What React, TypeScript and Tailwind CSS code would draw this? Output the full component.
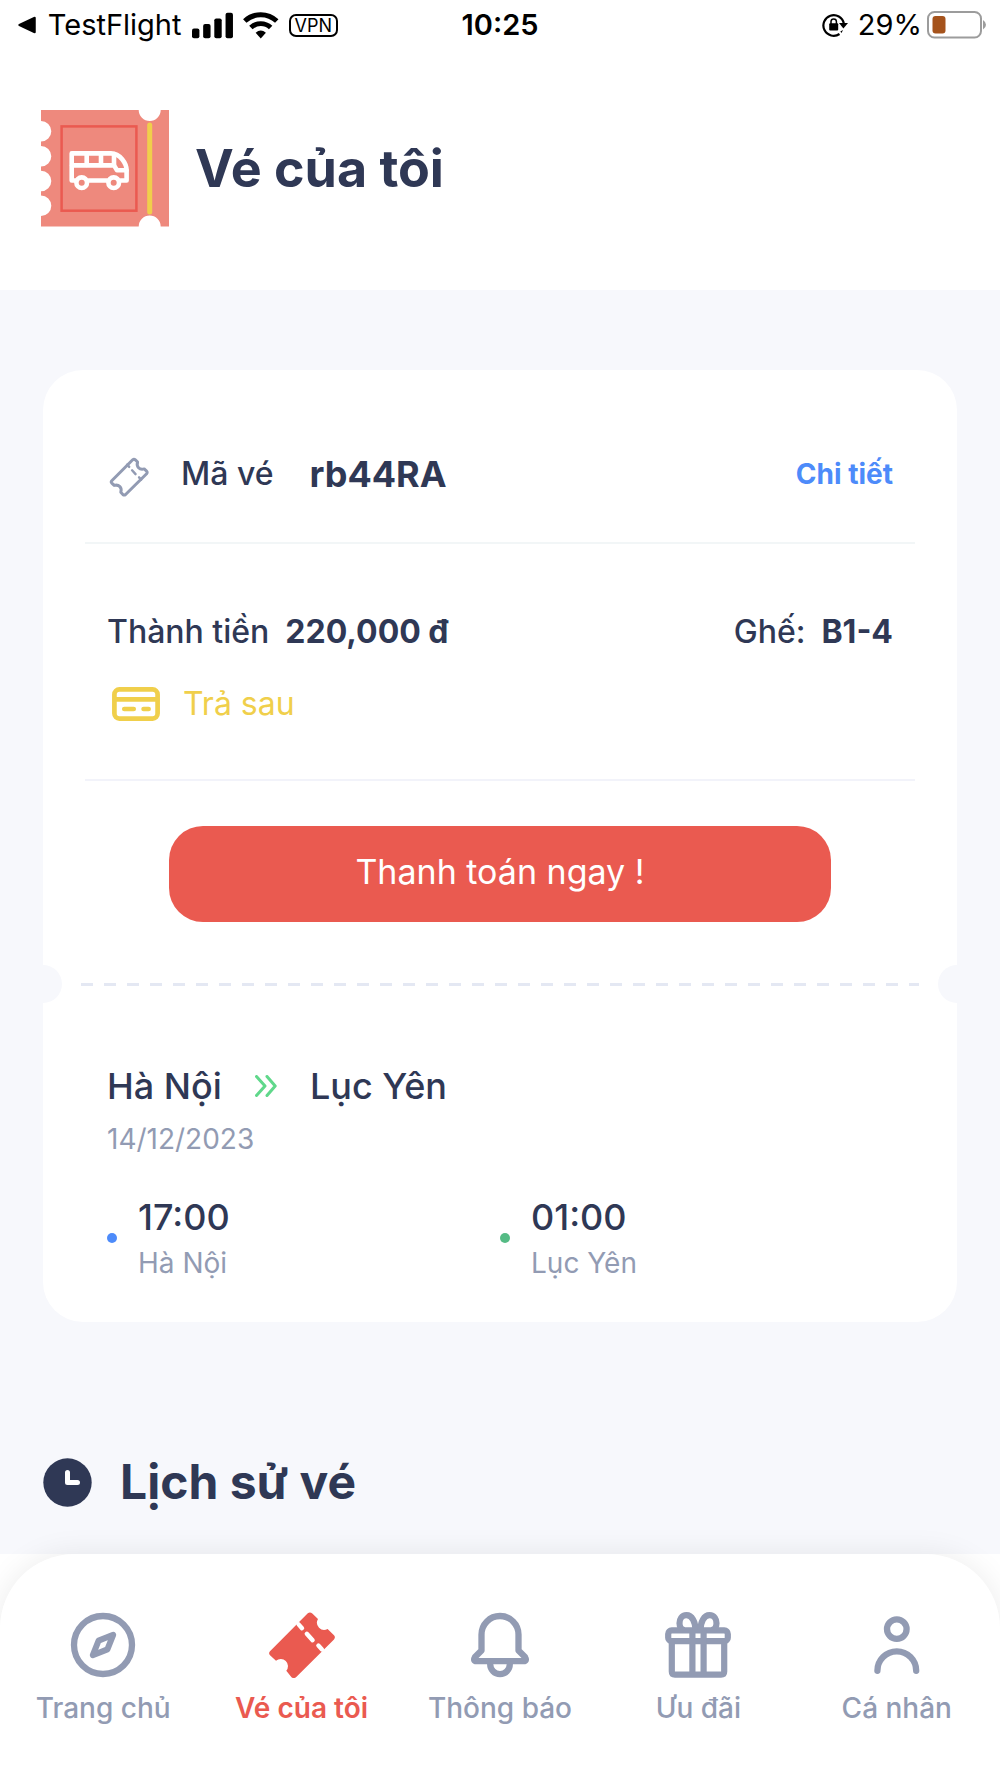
import React from "react";

interface NavItem {
  label: string;
  href: string;
  icon: React.ReactNode;
  active?: boolean;
}

interface StopProps {
  time: string;
  place: string;
  dotClass: string;
}

const TICKET_PATH =
  "M1 39.3 L38.8 1.3 Q41 -0.6 43.3 1.5 L49 7 A7.2 7.2 0 0 0 58.6 17 L65 23.2 Q66.8 25.3 65 27.5 L27 65.2 Q24.6 67 22.5 65.2 L17.3 58.7 A7.2 7.2 0 0 0 7 48.7 L1 43.2 Q-0.8 41.2 1 39.3 Z";

const TICKET_DASHES = "M29.6 12.4 L33 16.2 M37.8 21.8 L43.6 28.2 M49.4 33.6 L53 37.4";

const StatusBar: React.FC = () => {
  return (
    <div className="grid grid-cols-3 items-center h-[50px] px-[14px] text-[29px] leading-8 text-black">
      <div className="flex items-center">
        <svg width="18" height="18" viewBox="0 0 18 18" className="ml-1 mr-3">
          <path d="M1 8 L16 .8 Q18 .3 18 2 V16 Q18 17.7 16 17.2 L1 10 Q-.5 9 1 8 Z" />
        </svg>
        <span>TestFlight</span>
        <svg width="42" height="27" viewBox="0 0 42 27" className="ml-[10px] mr-[10px]">
          <rect x="0" y="16.5" width="7.5" height="10" rx="2" />
          <rect x="11.3" y="12" width="7.5" height="14.5" rx="2" />
          <rect x="22.6" y="6.3" width="7.5" height="20.2" rx="2" />
          <rect x="34" y="0.5" width="7.5" height="26" rx="2" />
        </svg>
        <svg width="36" height="27" viewBox="0 0 36 27" className="mr-[10px]">
          <path
            d="M1.8 9 A23.5 23.5 0 0 1 34.2 9"
            fill="none"
            stroke="#000"
            strokeWidth="5"
          />
          <path
            d="M8 15.6 A14.5 14.5 0 0 1 28 15.6"
            fill="none"
            stroke="#000"
            strokeWidth="5"
          />
          <path d="M12.8 20.8 Q18 16.4 23.2 20.8 L18 26.6 Z" />
        </svg>
        <span className="border-2 border-black rounded-[7px] px-1 text-[18px] leading-[19px]">
          VPN
        </span>
      </div>
      <div className="text-center font-semibold">10:25</div>
      <div className="flex items-center justify-end">
        <svg width="26" height="24" viewBox="0 0 26 24" className="mr-[10px]">
          <path
            d="M17.5 21 A10.3 10.3 0 1 1 21.8 10.5"
            fill="none"
            stroke="#000"
            strokeWidth="2.2"
          />
          <path d="M17 10 H26 L21.4 15.5 Z" />
          <path d="M18.3 18.6 L21 17 L19.5 20 Z" />
          <rect x="7.2" y="10.2" width="9" height="7.4" rx="1" />
          <path
            d="M9 11 V8.6 A2.7 2.7 0 0 1 14.4 8.6 V11"
            fill="none"
            stroke="#000"
            strokeWidth="1.5"
          />
        </svg>
        <span>29%</span>
        <svg width="60" height="28" viewBox="0 0 60 28" className="ml-1">
          <rect
            x="2"
            y="1"
            width="53"
            height="25.5"
            rx="6.5"
            fill="none"
            stroke="#9c9c9c"
            strokeWidth="2"
          />
          <rect x="6.5" y="5" width="13" height="17.5" rx="3" fill="#a5531c" />
          <path d="M57 9 Q60 11 60 13.8 Q60 16.6 57 18.6 Z" fill="#9c9c9c" />
        </svg>
      </div>
    </div>
  );
};

const TicketLogo: React.FC = () => {
  return (
    <svg width="128" height="117" viewBox="0 0 128 117" className="shrink-0">
      <path
        fill="#ee897d"
        d="M0 0 H97.7 A11 11 0 0 0 119.7 0 H128 V116.5 H119.7 A11 11 0 0 0 97.7 116.5 H0 V106 A10.3 10.3 0 0 0 0 85.4 V81.3 A10.3 10.3 0 0 0 0 60.7 V56.6 A10.3 10.3 0 0 0 0 36 V31.6 A10.3 10.3 0 0 0 0 11 Z"
      />
      <rect
        x="20.6"
        y="16.4"
        width="74.8"
        height="84.3"
        fill="none"
        stroke="#ea5a50"
        strokeWidth="2.5"
      />
      <path d="M108.7 15 V102" stroke="#f0cf4b" strokeWidth="5" strokeLinecap="round" />
      <g
        fill="none"
        stroke="#fff"
        strokeWidth="4.6"
        strokeLinecap="round"
        strokeLinejoin="round"
      >
        <path d="M34.5 70.5 H30.7 V43.4 H70 C79 43.4 85.6 53.5 85.6 60.5 V70.5 H79.5" />
        <path d="M47.5 70.5 H66" />
        <path d="M31 55.4 H73 L76 60.3 H85.5" />
        <path d="M45.7 44 V55 M60 44 V55 M73 44 V55" />
        <circle cx="40.7" cy="72.7" r="5.3" />
        <circle cx="72.7" cy="72.7" r="5.3" />
      </g>
    </svg>
  );
};

const Stop: React.FC<StopProps> = ({ time, place, dotClass }) => {
  return (
    <div className="flex items-center gap-[21px]">
      <span className={dotClass}></span>
      <div>
        <div className="text-[36px] leading-[48px] font-medium">{time}</div>
        <div className="mt-0.5 text-[28px] leading-[40px] text-[#929bb3]">{place}</div>
      </div>
    </div>
  );
};

const TicketCard: React.FC = () => {
  return (
    <article className="bg-white rounded-[40px] pb-[39px]">
      <div className="mx-[42px] px-[22px] pt-20 pb-11 flex items-center border-b-2 border-[#f2f6f7]">
        <svg
          width="42"
          height="42"
          viewBox="-4 -7 70 70"
          className="shrink-0 overflow-visible"
        >
          <g
            fill="none"
            stroke="#929bb3"
            strokeWidth="5"
            strokeLinecap="round"
            strokeLinejoin="round"
          >
            <path d="M4 39.3 L38.8 4.3 Q41 2.4 43.3 4.5 L47 8 C44.5 16 50 21.5 58 19.5 L62 23.2 Q63.8 25.3 62 27.5 L27 62.2 Q24.6 64 22.5 62.2 L19 58.5 C21.5 50.5 16 45 8 47 L4 43.2 Q2.2 41.2 4 39.3 Z" />
            <path d={TICKET_DASHES} strokeWidth="4" />
          </g>
        </svg>
        <span className="ml-8 text-[32px] leading-[48px] font-medium">Mã vé</span>
        <span className="ml-9 text-[36px] leading-[48px] font-bold">rb44RA</span>
        <a
          href="#chi-tiet"
          className="ml-auto text-[28px] leading-[48px] font-bold text-[#4d8bfa]"
        >
          Chi tiết
        </a>
      </div>

      <div className="mx-[42px] px-[22px] pt-16 pb-[51px] border-b-2 border-[#f2f3fa]">
        <div className="flex justify-between text-[32px] leading-[48px]">
          <div className="flex gap-4">
            <span className="font-medium">Thành tiền</span>
            <span className="font-bold">220,000 đ</span>
          </div>
          <div className="flex gap-4">
            <span className="font-medium">Ghế:</span>
            <span className="font-bold">B1-4</span>
          </div>
        </div>
        <div className="mt-6 ml-[5px] flex items-center gap-[23px] text-[32px] leading-[48px] text-[#f0cf4b]">
          <svg width="48" height="34" viewBox="0 0 48 34">
            <g fill="none" stroke="currentColor" strokeWidth="4.7" strokeLinecap="round">
              <rect x="2.4" y="2.4" width="43.2" height="29.2" rx="5" />
              <path d="M3 12.3 H45" />
              <path d="M12.3 22 H21.7 M31.6 22 H36.6" />
            </g>
          </svg>
          <span>Trả sau</span>
        </div>
      </div>

      <div className="px-[126px] pt-[45px]">
        <button
          type="button"
          className="w-full h-24 pb-1 rounded-[34px] bg-[#ea5a50] text-white text-[34px] leading-[48px]"
        >
          Thanh toán ngay !
        </button>
      </div>

      {/* tear line */}
      <div className="mt-[43px] flex items-center gap-[19px]">
        <span className="w-[19px] h-[38px] rounded-r-full bg-[#f7f8fc]"></span>
        <span className="flex-1 h-[3px] bg-[repeating-linear-gradient(to_right,#e4e8f3_0_12px,transparent_12px_23px)]"></span>
        <span className="w-[19px] h-[38px] rounded-l-full bg-[#f7f8fc]"></span>
      </div>

      <div className="px-16 pt-[59px]">
        <div className="flex items-center gap-[33px] text-[36px] leading-[48px] font-medium">
          <span>Hà Nội</span>
          <svg width="22" height="22" viewBox="0 0 22 22">
            <path
              d="M1.5 1.5 L10 11 L1.5 20.5 M12 1.5 L20.2 11 L12 20.5"
              fill="none"
              stroke="#60d88b"
              strokeWidth="3"
              strokeLinecap="round"
              strokeLinejoin="round"
            />
          </svg>
          <span>Lục Yên</span>
        </div>
        <div className="mt-[9px] text-[28px] leading-[40px] text-[#929bb3]">14/12/2023</div>
        <div className="mt-[34px] grid grid-cols-2">
          <Stop
            time="17:00"
            place="Hà Nội"
            dotClass="size-[10px] rounded-full bg-[#4d8bfa]"
          />
          <Stop
            time="01:00"
            place="Lục Yên"
            dotClass="size-[10px] rounded-full bg-[#55bb85]"
          />
        </div>
      </div>
    </article>
  );
};

const navItems: NavItem[] = [
  {
    label: "Trang chủ",
    href: "#trang-chu",
    icon: (
      <svg width="66" height="66" viewBox="-1 -1 66 66">
        <g fill="none" stroke="currentColor" strokeWidth="6.3" strokeLinejoin="round">
          <circle cx="32" cy="32" r="29" />
          <path d="M42.2 21.8 L36.4 36.4 L21.8 42.2 L27.6 27.6 Z" strokeWidth="6" />
        </g>
      </svg>
    ),
  },
  {
    label: "Vé của tôi",
    href: "#ve-cua-toi",
    active: true,
    icon: (
      <svg width="66" height="66" viewBox="0 0 66 66">
        <path d={TICKET_PATH} fill="currentColor" />
        <path d={TICKET_DASHES} stroke="#fff" strokeWidth="4.4" strokeLinecap="round" />
      </svg>
    ),
  },
  {
    label: "Thông báo",
    href: "#thong-bao",
    icon: (
      <svg width="66" height="66" viewBox="-4 -1 66 66">
        <g fill="none" stroke="currentColor" strokeWidth="6.3" strokeLinejoin="round">
          <path d="M10.5 37.5 V21.5 A18.5 18.5 0 0 1 47.5 21.5 V37.5 L54 44 Q56.3 48.2 52.5 48.2 H5.5 Q1.7 48.2 4 44 Z" />
          <path d="M19.2 50 V51.3 A9.8 9.8 0 0 0 38.8 51.3 V50" />
        </g>
      </svg>
    ),
  },
  {
    label: "Ưu đãi",
    href: "#uu-dai",
    icon: (
      <svg width="66" height="66" viewBox="0 0 66 66">
        <g fill="none" stroke="currentColor" strokeWidth="6.2">
          <rect x="3.2" y="18.4" width="59.6" height="10.8" rx="3.5" />
          <path d="M6.8 29 V59.5 Q6.8 62.6 10 62.6 H56 Q59.2 62.6 59.2 59.5 V29" />
          <path d="M27.4 18 V62 M38.6 18 V62" />
          <path d="M30.5 18 C30.5 10 27 3.2 21.5 3.2 C16.5 3.2 14.5 7.5 14.5 11.2 C14.5 15 16.5 18 20 18" />
          <path d="M35.5 18 C35.5 10 39 3.2 44.5 3.2 C49.5 3.2 51.5 7.5 51.5 11.2 C51.5 15 49.5 18 46 18" />
        </g>
      </svg>
    ),
  },
  {
    label: "Cá nhân",
    href: "#ca-nhan",
    icon: (
      <svg width="66" height="66" viewBox="-10 -4 66 66">
        <g fill="none" stroke="currentColor" strokeWidth="6.3" strokeLinecap="round">
          <circle cx="22.8" cy="13.1" r="9.8" />
          <path d="M3.4 54.8 A19.4 19.4 0 0 1 42.2 54.8" />
        </g>
      </svg>
    ),
  },
];

const BottomNav: React.FC = () => {
  return (
    <nav className="grid grid-cols-5 px-1 pt-[58px] pb-[50px] bg-white rounded-t-[74px] shadow-[0_0_30px_rgba(0,0,0,0.08)]">
      {navItems.map((item) => (
        <a
          key={item.label}
          href={item.href}
          className={
            item.active
              ? "flex flex-col items-center gap-[10px] text-[28px] leading-[40px] font-semibold text-[#ea5a50]"
              : "flex flex-col items-center gap-[10px] text-[28px] leading-[40px] font-medium text-[#929bb3]"
          }
        >
          {item.icon}
          {item.label}
        </a>
      ))}
    </nav>
  );
};

const App: React.FC = () => {
  return (
    <div className="min-h-screen flex flex-col overflow-hidden bg-white text-[#2f3855] font-['Inter','Noto_Sans',sans-serif]">
      <StatusBar />
      <header className="flex items-center gap-[26px] px-[41px] pt-[60px] pb-[63px]">
        <TicketLogo />
        <h1 className="text-[52px] leading-[64px] font-bold">Vé của tôi</h1>
      </header>
      <main className="flex-1 px-[43px] pt-20 pb-10 bg-[#f7f8fc]">
        <TicketCard />
        <h2 className="mt-32 flex items-center gap-7 text-[48px] leading-[64px] font-bold">
          <svg width="49" height="49" viewBox="0 0 49 49">
            <circle cx="24.5" cy="24.5" r="24.2" fill="#2f3855" />
            <path
              d="M24.5 14.5 V24.5 H34.5"
              fill="none"
              stroke="#fff"
              strokeWidth="5"
              strokeLinecap="round"
              strokeLinejoin="round"
            />
          </svg>
          Lịch sử vé
        </h2>
      </main>
      <BottomNav />
    </div>
  );
};

export default App;
